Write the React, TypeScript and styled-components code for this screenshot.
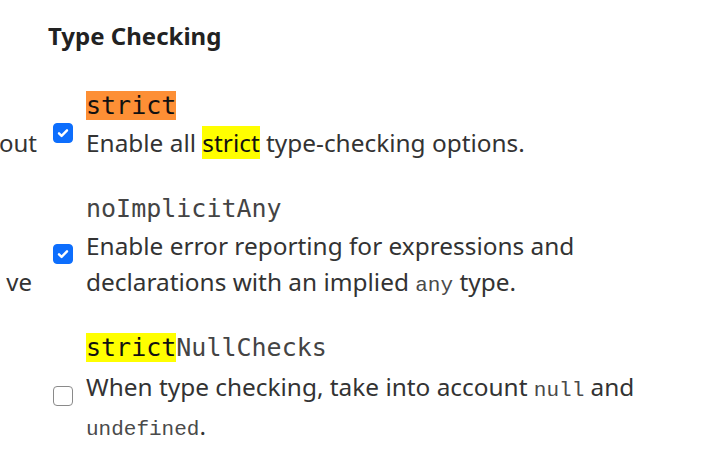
import React from 'react'
import styled, { createGlobalStyle, css } from 'styled-components'

const GlobalStyle = createGlobalStyle`
  html, body {
    margin: 0;
    background: #fff;
  }
  body {
    font-family: 'Noto Sans', 'Open Sans', sans-serif;
    color: #333;
    overflow: hidden;
  }
`

const Page = styled.div`
  width: 702px;
  height: 474px;
  padding-top: 20px;
  box-sizing: border-box;
`

const Heading = styled.h3`
  margin: 0 0 35px 48px;
  font-size: 24px;
  line-height: 32px;
  font-weight: 700;
  color: #222;
`

const OptionList = styled.div`
  display: grid;
  row-gap: 29px;
`

const Option = styled.div`
  display: grid;
  grid-template-columns: 40px 46px 1fr;
  align-items: center;
`

const Clipped = styled.div<{ $trail: number }>`
  align-self: end;
  display: flex;
  justify-content: flex-end;
  overflow: hidden;
  white-space: nowrap;
  padding-right: ${(p) => p.$trail}px;
  font-size: 24px;
  line-height: 36px;
`

const CheckBox = styled.span<{ $checked: boolean }>`
  justify-self: center;
  margin-top: 18px;
  width: 20px;
  height: 20px;
  box-sizing: border-box;
  border-radius: 4px;
  display: flex;
  align-items: center;
  justify-content: center;
  ${(p) =>
    p.$checked
      ? css`
          background: #0d6efd;
          border: 1px solid #0d6efd;
        `
      : css`
          background: #fff;
          border: 1.5px solid #8a8a8a;
        `}
`

const Body = styled.div`
  display: flex;
  flex-direction: column;
`

const Name = styled.div`
  font-family: 'DejaVu Sans Mono', monospace;
  font-size: 25px;
  line-height: 38px;
  color: #444;
`

const Mark = styled.span<{ $tone: 'orange' | 'yellow' }>`
  background: ${(p) => (p.$tone === 'orange' ? '#fd8f35' : '#ffff00')};
  color: #111;
`

const Desc = styled.div<{ $lead?: number }>`
  font-size: 24.4px;
  line-height: ${(p) => p.$lead ?? 36}px;
  color: #333;
  white-space: nowrap;
`

const Code = styled.code`
  font-family: 'Liberation Mono', monospace;
  font-size: 21px;
  line-height: 1;
  color: #4a4a4a;
`

const Check = () => (
  <svg width="14" height="14" viewBox="0 0 14 14">
    <path
      d="M3 7.3l2.6 2.6L11 4.3"
      fill="none"
      stroke="#fff"
      strokeWidth="2.4"
      strokeLinecap="round"
      strokeLinejoin="round"
    />
  </svg>
)

export default function App() {
  return (
    <Page>
      <GlobalStyle />
      <Heading>Type Checking</Heading>
      <OptionList>
        <Option>
          <Clipped $trail={3}>out</Clipped>
          <CheckBox $checked>
            <Check />
          </CheckBox>
          <Body>
            <Name>
              <Mark $tone="orange">strict</Mark>
            </Name>
            <Desc>
              Enable all <Mark $tone="yellow">strict</Mark> type-checking options.
            </Desc>
          </Body>
        </Option>
        <Option>
          <Clipped $trail={8}>ve</Clipped>
          <CheckBox $checked>
            <Check />
          </CheckBox>
          <Body>
            <Name>noImplicitAny</Name>
            <Desc>
              Enable error reporting for expressions and
              <br />
              declarations with an implied <Code>any</Code> type.
            </Desc>
          </Body>
        </Option>
        <Option>
          <Clipped $trail={0} />
          <CheckBox $checked={false} />
          <Body>
            <Name>
              <Mark $tone="yellow">strict</Mark>NullChecks
            </Name>
            <Desc $lead={39}>
              When type checking, take into account <Code>null</Code> and
              <br />
              <Code>undefined</Code>.
            </Desc>
          </Body>
        </Option>
      </OptionList>
    </Page>
  )
}
